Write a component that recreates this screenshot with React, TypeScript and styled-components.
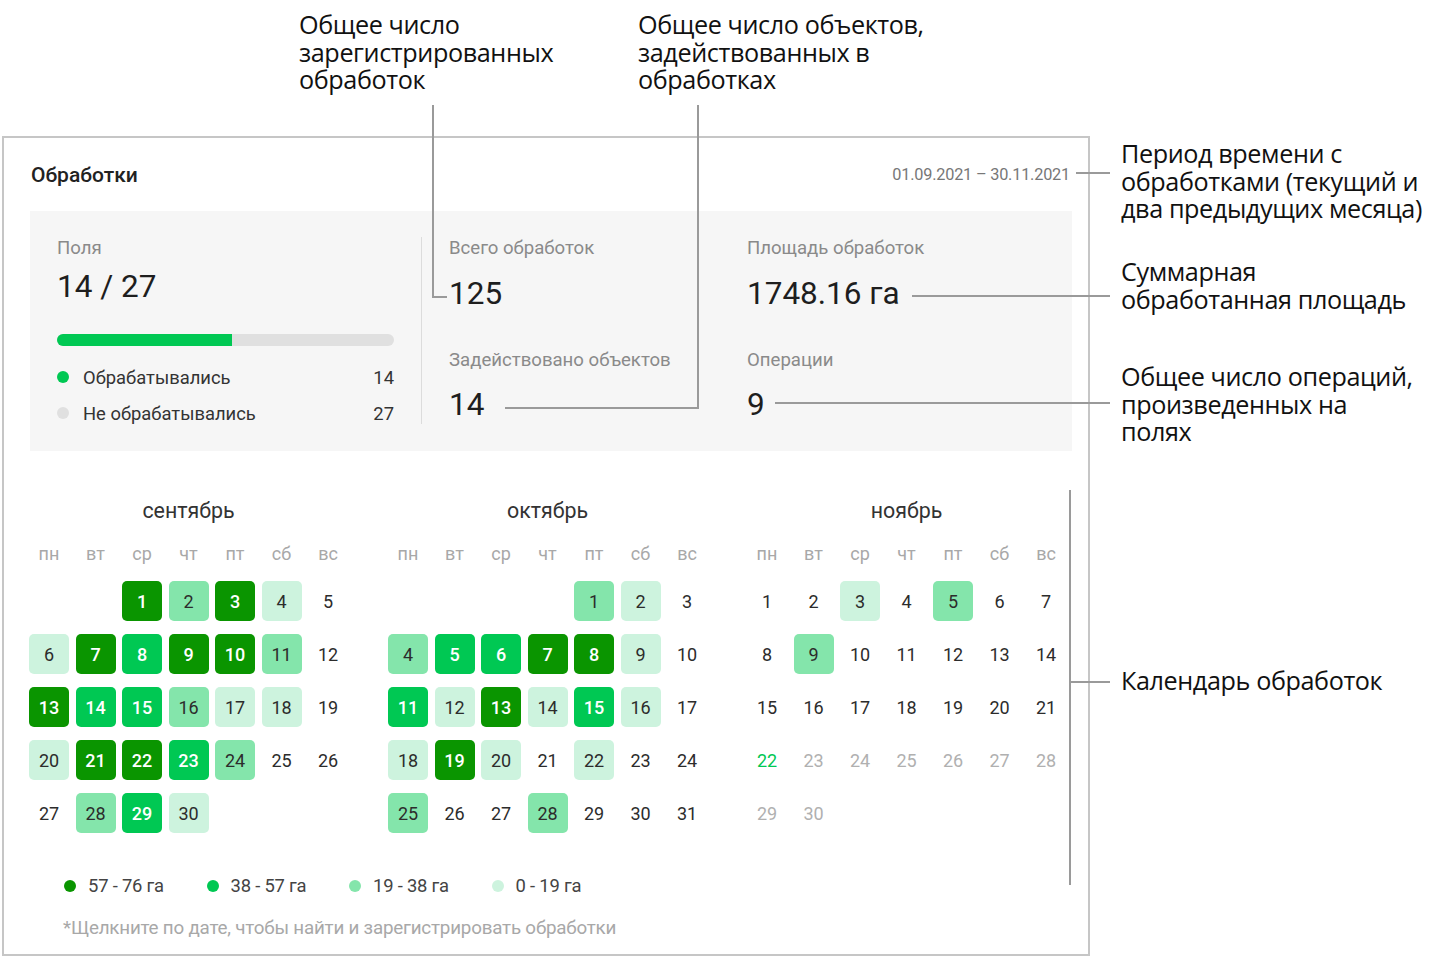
import React from "react";
import styled, { createGlobalStyle } from "styled-components";

const GlobalStyle = createGlobalStyle`
  html, body { margin: 0; padding: 0; background: #ffffff; }
  * { box-sizing: border-box; }
`;

const COLORS = {
  dark: "#0a9500",
  medium: "#00c853",
  light: "#84e5ab",
  lightest: "#cdf3de",
};

const Page = styled.div`
  position: relative;
  width: 1440px;
  height: 958px;
  overflow: hidden;
  padding: 136px 0 0 2px;
  font-family: Roboto, "Liberation Sans", sans-serif;
  color: #222;
`;

const Card = styled.section`
  width: 1088px;
  height: 820px;
  border: 2px solid #c6c6c6;
  padding: 0 16px 0 26px;
  display: flex;
  flex-direction: column;
`;

const Header = styled.header`
  height: 73px;
  display: flex;
  align-items: center;
  justify-content: space-between;
  padding: 0 2px 0 1px;
`;

const Title = styled.h2`
  margin: 0;
  font-size: 21px;
  font-weight: 500;
  color: #222;
`;

const Period = styled.span`
  font-size: 16.3px;
  color: #777;
  letter-spacing: -0.2px;
`;

const StatsPanel = styled.div`
  height: 240px;
  background: #f6f6f6;
  padding: 27px 27px 0 27px;
  display: grid;
  grid-template-columns: 337px 27px 1px 27px 298px 1fr;
  align-items: start;
`;

const Column = styled.div<{ $col: number }>`
  grid-column: ${(p) => p.$col};
  display: flex;
  flex-direction: column;
`;

const Divider = styled.div`
  grid-column: 3;
  width: 1px;
  height: 187px;
  margin-top: -1px;
  background: #dcdcdc;
`;

const StatLabel = styled.div<{ $gap?: number }>`
  font-size: 18.6px;
  line-height: 20px;
  color: #8a8a8a;
  margin-top: ${(p) => p.$gap ?? 0}px;
  white-space: nowrap;
`;

const StatValue = styled.div<{ $gap: number }>`
  font-size: 31.5px;
  line-height: 36px;
  color: #1e1e1e;
  margin-top: ${(p) => p.$gap}px;
  white-space: nowrap;
`;

const Bar = styled.div`
  margin-top: 29px;
  height: 12px;
  border-radius: 6px;
  background: #e0e0e0;
  overflow: hidden;
`;

const BarFill = styled.div`
  height: 100%;
  background: ${COLORS.medium};
`;

const FieldRow = styled.div<{ $gap: number }>`
  margin-top: ${(p) => p.$gap}px;
  display: flex;
  align-items: center;
  height: 20px;
  font-size: 18.4px;
  color: #333;
`;

const Dot = styled.span<{ $color: string; $size?: number }>`
  width: ${(p) => p.$size ?? 12}px;
  height: ${(p) => p.$size ?? 12}px;
  border-radius: 50%;
  background: ${(p) => p.$color};
  flex: none;
`;

const FieldName = styled.span`
  margin-left: 14px;
  flex: 1;
`;

const FieldCount = styled.span`
  color: #333;
`;

const Months = styled.div`
  margin-top: 48px;
  display: flex;
  gap: 40px;
  margin-left: -1px;
`;

const Month = styled.div`
  width: 319px;
  display: flex;
  flex-direction: column;
`;

const MonthName = styled.div`
  text-align: center;
  font-size: 21.4px;
  line-height: 24px;
  color: #333;
`;

const WeekRow = styled.div`
  margin-top: 21px;
  display: grid;
  grid-template-columns: repeat(7, 40px);
  column-gap: 6.5px;
`;

const WeekDay = styled.div`
  text-align: center;
  font-size: 18px;
  line-height: 20px;
  color: #a8a8a8;
`;

const DaysGrid = styled.div`
  margin-top: 17px;
  display: grid;
  grid-template-columns: repeat(7, 40px);
  grid-auto-rows: 40px;
  column-gap: 6.5px;
  row-gap: 13px;
`;

type Level = 0 | 1 | 2 | 3 | 4;
type DayState = "normal" | "today" | "future";

const levelBg: Record<Level, string> = {
  0: "transparent",
  1: COLORS.lightest,
  2: COLORS.light,
  3: COLORS.medium,
  4: COLORS.dark,
};

const Day = styled.div<{ $level: Level; $state: DayState; $start?: number }>`
  ${(p) => (p.$start ? `grid-column-start: ${p.$start};` : "")}
  display: flex;
  align-items: center;
  justify-content: center;
  border-radius: 5px;
  font-size: 18px;
  background: ${(p) => levelBg[p.$level]};
  font-weight: ${(p) => (p.$level >= 3 ? 500 : 400)};
  color: ${(p) =>
    p.$level >= 3
      ? "#ffffff"
      : p.$state === "today"
      ? COLORS.medium
      : p.$state === "future"
      ? "#b0b0b0"
      : "#2c2c2c"};
  cursor: pointer;
`;

const Legend = styled.div`
  margin-top: 42px;
  margin-left: 34px;
  display: grid;
  grid-template-columns: repeat(4, 142.5px);
  align-items: center;
  height: 20px;
`;

const LegendItem = styled.div`
  display: flex;
  align-items: center;
  gap: 12px;
  font-size: 18.4px;
  color: #444;
  letter-spacing: -0.2px;
`;

const Note = styled.div`
  margin-top: 23px;
  margin-left: 33px;
  font-size: 18.8px;
  line-height: 20px;
  color: #a8a8a8;
  letter-spacing: -0.2px;
`;

/* ---- annotation overlay ---- */

const Callout = styled.div<{ $x: number; $y: number }>`
  position: absolute;
  left: ${(p) => p.$x}px;
  top: ${(p) => p.$y}px;
  font-family: "Open Sans", "Noto Sans", sans-serif;
  font-size: 25.2px;
  line-height: 27.5px;
  color: #111;
  letter-spacing: -0.4px;
  white-space: pre;
`;

const Leader = styled.div<{ $x: number; $y: number; $w: number; $h: number }>`
  position: absolute;
  left: ${(p) => p.$x}px;
  top: ${(p) => p.$y}px;
  width: ${(p) => p.$w}px;
  height: ${(p) => p.$h}px;
  background: #9a9a9a;
`;

const weekDays = ["пн", "вт", "ср", "чт", "пт", "сб", "вс"];

type MonthData = {
  name: string;
  start: number;
  days: number;
  levels: Record<number, Level>;
  today?: number;
};

const months: MonthData[] = [
  {
    name: "сентябрь",
    start: 3,
    days: 30,
    levels: {
      1: 4, 2: 2, 3: 4, 4: 1,
      6: 1, 7: 4, 8: 3, 9: 4, 10: 4, 11: 2,
      13: 4, 14: 3, 15: 3, 16: 2, 17: 1, 18: 1,
      20: 1, 21: 4, 22: 4, 23: 3, 24: 2,
      28: 2, 29: 3, 30: 1,
    },
  },
  {
    name: "октябрь",
    start: 5,
    days: 31,
    levels: {
      1: 2, 2: 1,
      4: 2, 5: 3, 6: 3, 7: 4, 8: 4, 9: 1,
      11: 3, 12: 1, 13: 4, 14: 1, 15: 3, 16: 1,
      18: 1, 19: 4, 20: 1, 22: 1,
      25: 2, 28: 2,
    },
  },
  {
    name: "ноябрь",
    start: 1,
    days: 30,
    levels: { 3: 1, 5: 2, 9: 2 },
    today: 22,
  },
];

const legend = [
  { color: COLORS.dark, label: "57 - 76 га" },
  { color: COLORS.medium, label: "38 - 57 га" },
  { color: COLORS.light, label: "19 - 38 га" },
  { color: COLORS.lightest, label: "0 - 19 га" },
];

function MonthCalendar({ m }: { m: MonthData }) {
  const days = Array.from({ length: m.days }, (_, i) => i + 1);
  return (
    <Month>
      <MonthName>{m.name}</MonthName>
      <WeekRow>
        {weekDays.map((d) => (
          <WeekDay key={d}>{d}</WeekDay>
        ))}
      </WeekRow>
      <DaysGrid>
        {days.map((d) => {
          const state: DayState =
            m.today === undefined ? "normal" : d === m.today ? "today" : d > m.today ? "future" : "normal";
          return (
            <Day
              key={d}
              $level={(m.levels[d] ?? 0) as Level}
              $state={state}
              $start={d === 1 ? m.start : undefined}
            >
              {d}
            </Day>
          );
        })}
      </DaysGrid>
    </Month>
  );
}

export default function App() {
  const processed = 14;
  const total = 27;
  return (
    <>
      <GlobalStyle />
      <Page>
        <Card>
          <Header>
            <Title>Обработки</Title>
            <Period>01.09.2021 – 30.11.2021</Period>
          </Header>
          <StatsPanel>
            <Column $col={1}>
              <StatLabel>Поля</StatLabel>
              <StatValue $gap={11}>14 / 27</StatValue>
              <Bar>
                <BarFill style={{ width: `${(processed / total) * 100}%` }} />
              </Bar>
              <FieldRow $gap={21}>
                <Dot $color={COLORS.medium} />
                <FieldName>Обрабатывались</FieldName>
                <FieldCount>14</FieldCount>
              </FieldRow>
              <FieldRow $gap={16}>
                <Dot $color="#e0e0e0" />
                <FieldName>Не обрабатывались</FieldName>
                <FieldCount>27</FieldCount>
              </FieldRow>
            </Column>
            <Divider />
            <Column $col={5}>
              <StatLabel>Всего обработок</StatLabel>
              <StatValue $gap={18}>125</StatValue>
              <StatLabel $gap={38}>Задействовано объектов</StatLabel>
              <StatValue $gap={17}>14</StatValue>
            </Column>
            <Column $col={6}>
              <StatLabel>Площадь обработок</StatLabel>
              <StatValue $gap={18}>1748.16 га</StatValue>
              <StatLabel $gap={38}>Операции</StatLabel>
              <StatValue $gap={17}>9</StatValue>
            </Column>
          </StatsPanel>
          <Months>
            {months.map((m) => (
              <MonthCalendar key={m.name} m={m} />
            ))}
          </Months>
          <Legend>
            {legend.map((l) => (
              <LegendItem key={l.label}>
                <Dot $color={l.color} $size={12} />
                {l.label}
              </LegendItem>
            ))}
          </Legend>
          <Note>*Щелкните по дате, чтобы найти и зарегистрировать обработки</Note>
        </Card>

        <Callout $x={299} $y={11}>{"Общее число\nзарегистрированных\nобработок"}</Callout>
        <Callout $x={638} $y={11}>{"Общее число объектов,\nзадействованных в\nобработках"}</Callout>
        <Callout $x={1121} $y={140}>{"Период времени с\nобработками (текущий и\nдва предыдущих месяца)"}</Callout>
        <Callout $x={1121} $y={258}>{"Суммарная\nобработанная площадь"}</Callout>
        <Callout $x={1121} $y={363}>{"Общее число операций,\nпроизведенных на\nполях"}</Callout>
        <Callout $x={1121} $y={667}>{"Календарь обработок"}</Callout>

        <Leader $x={432} $y={105} $w={2} $h={193} />
        <Leader $x={432} $y={296} $w={15} $h={2} />
        <Leader $x={697} $y={105} $w={2} $h={304} />
        <Leader $x={505} $y={407} $w={194} $h={2} />
        <Leader $x={1076} $y={172} $w={34} $h={2} />
        <Leader $x={912} $y={295} $w={198} $h={2} />
        <Leader $x={775} $y={402} $w={335} $h={2} />
        <Leader $x={1069} $y={490} $w={2} $h={395} />
        <Leader $x={1069} $y={681} $w={41} $h={2} />
      </Page>
    </>
  );
}
